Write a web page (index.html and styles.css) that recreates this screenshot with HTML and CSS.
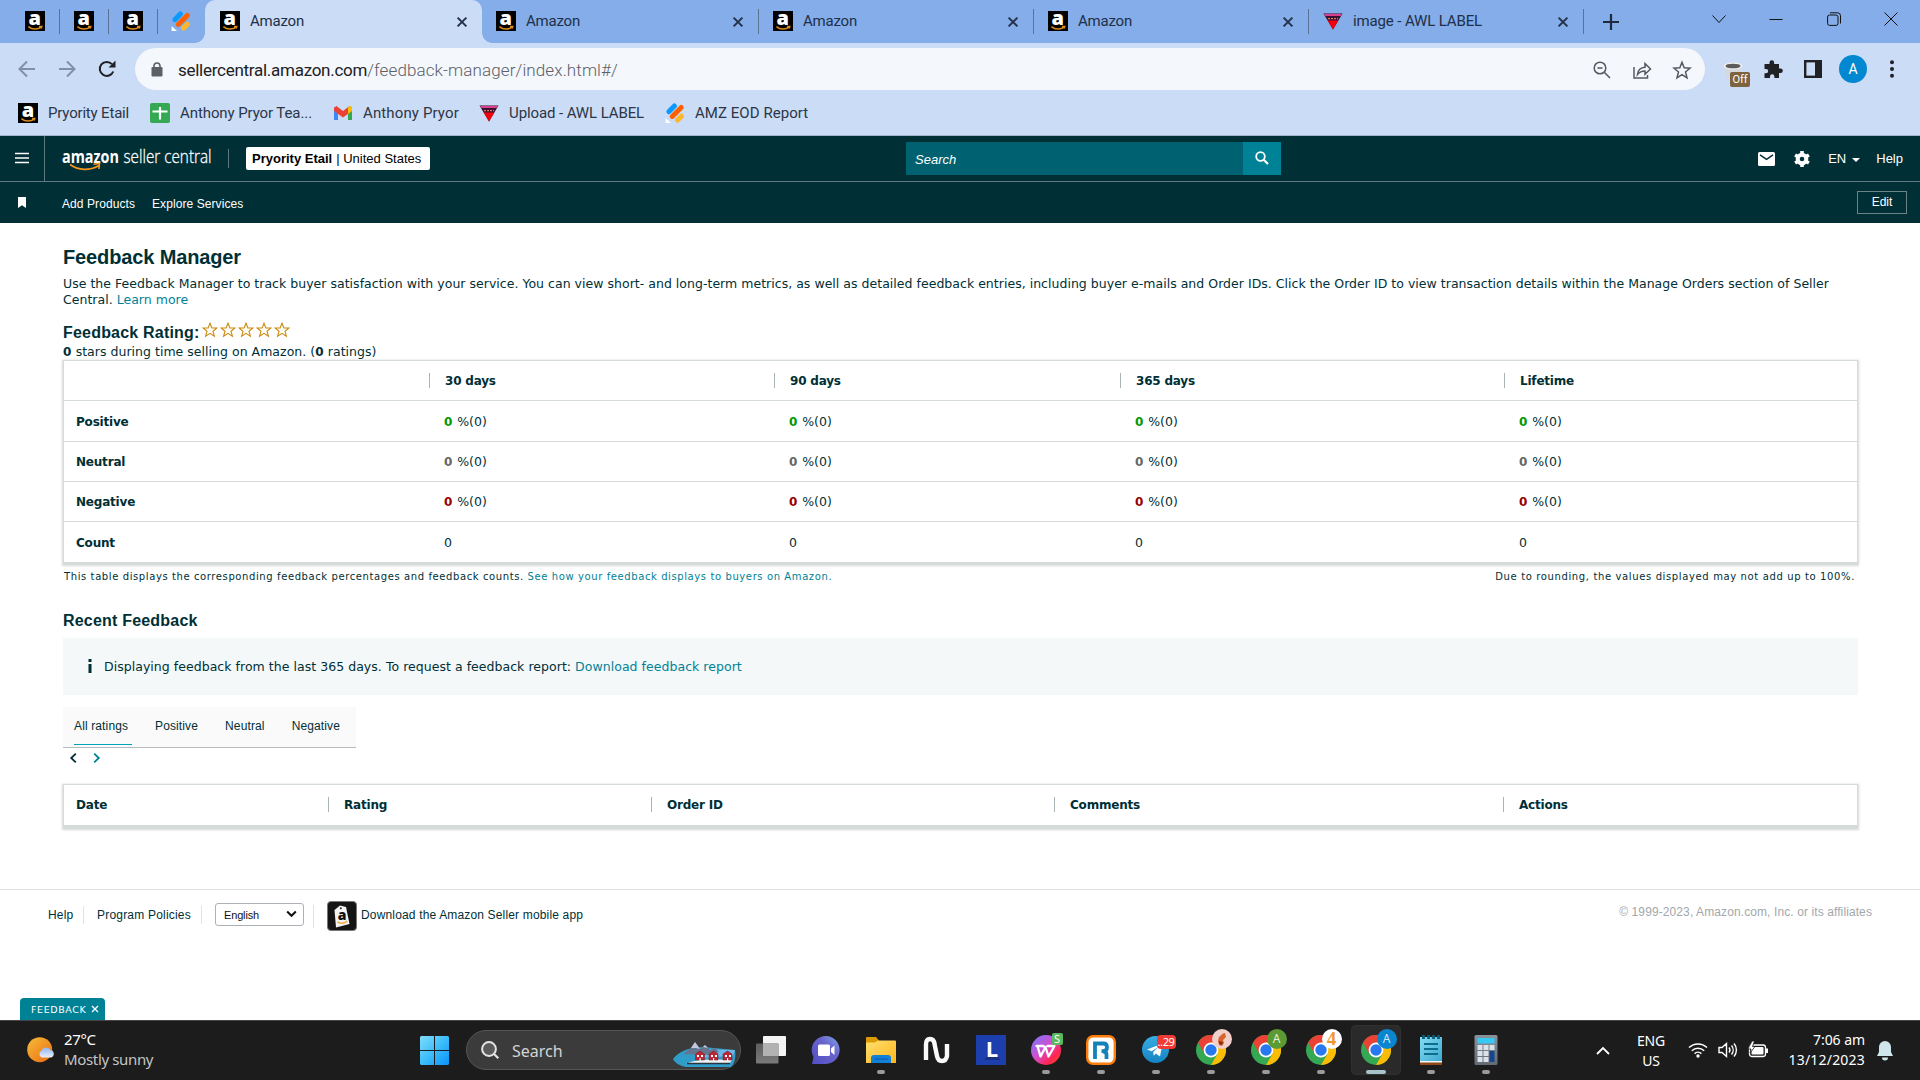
FILE: index.html
```html
<!DOCTYPE html>
<html lang="en">

<head>
    <meta charset="utf-8">
    <title>Feedback Manager</title>
    <link rel="stylesheet" href="styles.css">
</head>

<body>

    <!-- shared icons -->
    <svg class="defs">
        <defs>
            <linearGradient id="gwin" x1="0" y1="0" x2="1" y2="1"><stop offset="0" stop-color="#82dcfb"/><stop offset=".5" stop-color="#3cbdfb"/><stop offset="1" stop-color="#0a92f8"/></linearGradient>
            <linearGradient id="gsun" x1="0" y1="0" x2="1" y2="1"><stop offset="0" stop-color="#f5bd3a"/><stop offset="1" stop-color="#ec6a10"/></linearGradient>
            <linearGradient id="gcloud" x1="0" y1="0" x2="0" y2="1"><stop offset="0" stop-color="#93b5f2"/><stop offset="1" stop-color="#e8effb"/></linearGradient>
            <linearGradient id="gchat" x1="0" y1="1" x2="1" y2="0"><stop offset="0" stop-color="#4f4fc4"/><stop offset=".6" stop-color="#6a63cc"/><stop offset="1" stop-color="#7fa6e6"/></linearGradient>
            <linearGradient id="gfold" x1="0" y1="0" x2="1" y2="1"><stop offset="0" stop-color="#ffdf70"/><stop offset="1" stop-color="#ffb71c"/></linearGradient>
            <linearGradient id="gwps" x1="0" y1="0" x2="1" y2="1"><stop offset="0" stop-color="#6f7bff"/><stop offset=".45" stop-color="#d24fd0"/><stop offset=".75" stop-color="#ff2450"/><stop offset="1" stop-color="#ff5a1e"/></linearGradient>
            <linearGradient id="gtg" x1="0" y1="0" x2="0" y2="1"><stop offset="0" stop-color="#37aee2"/><stop offset="1" stop-color="#1583c2"/></linearGradient>
            <linearGradient id="gnote" x1="0" y1="0" x2="1" y2="1"><stop offset="0" stop-color="#85dcf2"/><stop offset="1" stop-color="#3ba8d0"/></linearGradient>
            <linearGradient id="gcalc" x1="0" y1="0" x2="0" y2="1"><stop offset="0" stop-color="#8a929c"/><stop offset="1" stop-color="#626a74"/></linearGradient>
            <linearGradient id="gtv" x1="0" y1="0" x2="0" y2="1"><stop offset="0" stop-color="#5e5e5e"/><stop offset="1" stop-color="#7a7a7a"/></linearGradient>
            <symbol id="amz" viewBox="0 0 20 20">
                <rect width="20" height="20" fill="#000"/>
                <text x="9.8" y="13.6" text-anchor="middle" font-family="Open Sans" font-weight="800" font-size="20" fill="#fff">a</text>
                <path d="M3.4 15.6c3.8 3.2 9.4 3 12.8.6M14 15.4h2.8l-.7 2.2" fill="none" stroke="#d98a1c" stroke-width="1.5"/>
            </symbol>
            <symbol id="jot" viewBox="0 0 20 20">
                <path d="M4 8.6 9.4 3" stroke="#0a99ff" stroke-width="5" stroke-linecap="round"/>
                <path d="M7.2 13.4 16.2 4.4" stroke="#ff6100" stroke-width="5" stroke-linecap="round"/>
                <path d="M12.6 17 16.4 13.2" stroke="#ffb629" stroke-width="5" stroke-linecap="round"/>
                <path d="M.6 15v5H6z" fill="#fff"/>
            </symbol>
            <symbol id="awl" viewBox="0 0 20 20">
                <path d="M.5 2.500h19L10 18.500z" fill="#3c1030"/>
                <path d="M4.600 9.500h10.800L10 18.500z" fill="#f4000c"/>
                <path d="M1.200 3h17.600l-1.200 2H2.400z" fill="#d8408c"/>
                <path d="M5 7.600h10" stroke="#e07a4a" stroke-width="1.400" stroke-dasharray="2 1"/>
            </symbol>
            <symbol id="cross" viewBox="0 0 12 12"><path d="M1.600 1.600l8.800 8.800M10.400 1.600l-8.800 8.800" stroke="#25324a" stroke-width="2" fill="none"/></symbol>
            <symbol id="chrome" viewBox="0 0 30 30">
                <circle cx="15" cy="15" r="15" fill="#34a853"/>
                <path d="M15 15 2 7.500A15 15 0 0 1 28 7.500z" fill="#ea4335"/>
                <path d="M15 7.500H28A15 15 0 0 1 15 30L21.500 18.800z" fill="#fbbc05"/>
                <path d="M2 7.500 8.500 18.800 15 8z" fill="#ea4335"/>
                <circle cx="15" cy="15" r="7.400" fill="#fff"/>
                <circle cx="15" cy="15" r="5.700" fill="#2878f0"/>
            </symbol>
            <symbol id="star" viewBox="0 0 16 16"><path d="M8 1.200 9.900 6h5l-3.900 3.200 1.400 5L8 11.300l-4.400 2.900 1.400-5L1.100 6h5z" fill="#fffdf6" stroke="#cc8a12" stroke-width="1.100"/></symbol>
        </defs>
    </svg>

    <!-- browser tabs -->
    <div class="tabs">
        <div class="pin"><svg><use href="#amz"/></svg></div>
        <div class="pin"><svg><use href="#amz"/></svg></div>
        <div class="pin"><svg><use href="#amz"/></svg></div>
        <div class="pin last"><svg><use href="#jot"/></svg></div>
        <div class="tab active"><svg class="fav"><use href="#amz"/></svg><span>Amazon</span><svg class="x"><use href="#cross"/></svg></div>
        <div class="tab"><svg class="fav"><use href="#amz"/></svg><span>Amazon</span><svg class="x"><use href="#cross"/></svg></div>
        <div class="tab"><svg class="fav"><use href="#amz"/></svg><span>Amazon</span><svg class="x"><use href="#cross"/></svg></div>
        <div class="tab"><svg class="fav"><use href="#amz"/></svg><span>Amazon</span><svg class="x"><use href="#cross"/></svg></div>
        <div class="tab"><svg class="fav"><use href="#awl"/></svg><span class="wide">image - AWL LABEL</span><svg class="x"><use href="#cross"/></svg></div>
        <svg class="plus" viewBox="0 0 16 16"><path d="M8 0v16M0 8h16" stroke="#1f2a3c" stroke-width="2.200"/></svg>
        <div class="winbtns">
            <svg viewBox="0 0 14 14"><path d="M.5 3.500 7 10.500l6.500-7" /></svg>
            <svg viewBox="0 0 14 14"><path d="M.5 7.500h13" /></svg>
            <svg viewBox="0 0 14 14"><rect x=".6" y="3" width="10.400" height="10.400" rx="2"/><path d="M3 .8h7.500q3 0 3 3V11.500"/></svg>
            <svg viewBox="0 0 14 14"><path d="M.5.500l13 13M13.500.500l-13 13"/></svg>
        </div>
    </div>

    <!-- address bar -->
    <div class="toolbar">
        <svg class="nav dim" viewBox="0 0 18 18"><path d="M17 9H2M9 1.500 1.500 9 9 16.500"/></svg>
        <svg class="nav dim" viewBox="0 0 18 18"><path d="M1 9h15M9 1.500 16.500 9 9 16.500"/></svg>
        <svg class="nav reload" viewBox="0 0 18 18"><path d="M15.300 11.500A7 7 0 1 1 14 4.200"/><path d="M17.500.5v7h-7z" class="tip"/></svg>
        <div class="omnibox">
            <svg class="lock" viewBox="0 0 12 15"><rect x=".5" y="5" width="11" height="9.500" rx="1.200" fill="#5c6066"/><path d="M3 6V4a3 3 0 0 1 6 0v2" fill="none" stroke="#5c6066" stroke-width="1.600"/></svg>
            <span class="host">sellercentral.amazon.com</span><span class="path">/feedback-manager/index.html#/</span>
            <svg class="ob first" viewBox="0 0 18 18"><circle cx="7" cy="7" r="5.800"/><path d="M11.500 11.500 17 17M4.400 7h5.200"/></svg>
            <svg class="ob" viewBox="0 0 18 18"><path d="M1 6v11h13.500v-3"/><path d="M4.500 13.500C5 9 8 6.500 12 6.300V2.500l5.500 5.500-5.500 5.300V10C8.500 10 6.500 11 4.500 13.500z"/></svg>
            <svg class="ob" viewBox="0 0 18 18"><path d="M9 1.200l2.200 5.600 5.800.4-4.500 3.800 1.500 5.800L9 13.600l-5 3.200 1.500-5.800L1 7.200l5.800-.4z"/></svg>
        </div>
        <div class="cup">
            <svg viewBox="0 0 20 18"><path d="M1 4h18l-3 13H4z" fill="#d5d8dd"/><ellipse cx="10" cy="4" rx="9.500" ry="3.600" fill="#eeeeec"/><ellipse cx="10" cy="4" rx="7.500" ry="2.300" fill="#5b5b5b"/></svg>
            <span>Off</span>
        </div>
        <svg class="ext" viewBox="0 0 20 20"><path d="M1.500 5h5V3.500a2.300 2.300 0 0 1 4.600 0V5H16v4.500h1.500a2.300 2.300 0 0 1 0 4.600H16V19h-4.600v-1.500a2.200 2.200 0 0 0-4.400 0V19H1.500v-4.700H3a2.200 2.200 0 0 0 0-4.400H1.500z" fill="#202124"/></svg>
        <svg class="side" viewBox="0 0 18 18"><rect x="1.200" y="1.200" width="15.600" height="15.600" fill="none" stroke="#202124" stroke-width="2.400"/><rect x="11" y="1" width="6" height="16" fill="#202124"/></svg>
        <div class="avatar">A</div>
        <svg class="dots" viewBox="0 0 4 18"><circle cx="2" cy="2.200" r="2"/><circle cx="2" cy="9" r="2"/><circle cx="2" cy="15.800" r="2"/></svg>
    </div>

    <!-- bookmarks -->
    <div class="bookmarks">
        <a class="bm b1"><svg><use href="#amz"/></svg>Pryority Etail</a>
        <a class="bm b2"><svg viewBox="0 0 20 20"><rect width="20" height="20" rx="2" fill="#34a853"/><path d="M10 4v12.500M2.500 8.500h15" stroke="#fff" stroke-width="2.200"/></svg>Anthony Pryor Tea...</a>
        <a class="bm b3"><svg viewBox="0 0 20 20"><path d="M1 4v13h4V8z" fill="#4285f4"/><path d="M19 4v13h-4V8z" fill="#34a853"/><path d="M1 4.800 3.500 3 10 8l6.500-5L19 4.800V8l-9 6.500L1 8z" fill="#ea4335"/><path d="M15 4.200 17 3q2 .4 2 2v3l-4 3z" fill="#fbbc04"/></svg>Anthony Pryor</a>
        <a class="bm b4"><svg><use href="#awl"/></svg>Upload - AWL LABEL</a>
        <a class="bm b5"><svg><use href="#jot"/></svg>AMZ EOD Report</a>
    </div>

    <!-- seller central header -->
    <div class="header">
        <div class="burger"><svg viewBox="0 0 14 12"><path d="M0 1.500h14M0 6h14M0 10.500h14" stroke="#fff" stroke-width="1.400"/></svg></div>
        <svg class="logo" viewBox="0 0 150 24">
            <text x="0" y="15" font-family="Open Sans" font-weight="700" font-size="17.500" textLength="57" lengthAdjust="spacingAndGlyphs" fill="#fff">amazon</text>
            <text x="61.500" y="15" font-family="Open Sans" font-weight="300" font-size="18" textLength="88" lengthAdjust="spacingAndGlyphs" fill="#fff" stroke="#fff" stroke-width=".3">seller central</text>
            <path d="M8 16.500c9 6.500 20 6 28.500 1.200M31.500 16.300l6-.8-.6 5.500" fill="none" stroke="#f7981f" stroke-width="1.600"/>
        </svg>
        <div class="store"><b>Pryority Etail</b><span>| United States</span></div>
        <div class="search"><i>Search</i><div class="go"><svg viewBox="0 0 14 14"><circle cx="5.500" cy="5.500" r="4.300" fill="none" stroke="#fff" stroke-width="1.800"/><path d="M8.700 8.700 13 13" stroke="#fff" stroke-width="2.200"/></svg></div></div>
        <div class="right">
            <svg class="mail" viewBox="0 0 17 14"><rect width="17" height="14" rx="1.500" fill="#fff"/><path d="M2 2.800l6.500 4.500L15 2.800" fill="none" stroke="#002f36" stroke-width="1.500"/></svg>
            <svg class="gear" viewBox="0 0 16 16"><circle cx="8" cy="8" r="4.300" fill="none" stroke="#fff" stroke-width="4"/><path d="M8 0v3.500M8 12.500V16M1.100 4l3 1.700M11.900 10.300l3 1.700M1.100 12l3-1.700M11.900 5.700l3-1.700" stroke="#fff" stroke-width="3.600"/></svg>
            <span>EN</span><em class="caret"></em><span class="help">Help</span>
        </div>
    </div>
    <div class="subnav">
        <svg class="flag" viewBox="0 0 8 11"><path d="M0 0h8v11L4 8.200 0 11z" fill="#fff"/></svg>
        <span class="s1">Add Products</span>
        <span class="s2">Explore Services</span>
        <span class="edit">Edit</span>
    </div>

    <!-- page content -->
    <div class="content">
        <h1>Feedback Manager</h1>
        <p class="intro">Use the Feedback Manager to track buyer satisfaction with your service. You can view short- and long-term metrics, as well as detailed feedback entries, including buyer e-mails and Order IDs. Click the Order ID to view transaction details within the Manage Orders section of Seller<br>Central. <a>Learn more</a></p>
        <div class="rating">
            <h2>Feedback Rating:</h2>
            <svg><use href="#star"/></svg><svg><use href="#star"/></svg><svg><use href="#star"/></svg><svg><use href="#star"/></svg><svg><use href="#star"/></svg>
        </div>
        <p class="stars"><b>0</b> stars during time selling on Amazon. (<b>0</b> ratings)</p>
        <table class="scores">
            <colgroup><col class="c1"><col class="c2"><col class="c3"><col class="c4"><col></colgroup>
            <tr><th></th><th><span>30 days</span></th><th><span>90 days</span></th><th><span>365 days</span></th><th><span>Lifetime</span></th></tr>
            <tr class="tall"><td>Positive</td><td><b class="pos">0</b> %(0)</td><td><b class="pos">0</b> %(0)</td><td><b class="pos">0</b> %(0)</td><td><b class="pos">0</b> %(0)</td></tr>
            <tr><td>Neutral</td><td><b class="neu">0</b> %(0)</td><td><b class="neu">0</b> %(0)</td><td><b class="neu">0</b> %(0)</td><td><b class="neu">0</b> %(0)</td></tr>
            <tr><td>Negative</td><td><b class="neg">0</b> %(0)</td><td><b class="neg">0</b> %(0)</td><td><b class="neg">0</b> %(0)</td><td><b class="neg">0</b> %(0)</td></tr>
            <tr class="tall"><td>Count</td><td>0</td><td>0</td><td>0</td><td>0</td></tr>
        </table>
        <div class="notes">
            <span>This table displays the corresponding feedback percentages and feedback counts. <a>See how your feedback displays to buyers on Amazon.</a></span>
            <span class="round">Due to rounding, the values displayed may not add up to 100%.</span>
        </div>
        <h2 class="recent">Recent Feedback</h2>
        <div class="info"><svg viewBox="0 0 4 14"><path d="M.5 0h3v3h-3zM.5 5h3v9h-3z" fill="#002f36"/></svg>Displaying feedback from the last 365 days. To request a feedback report:&nbsp;<a>Download feedback report</a></div>
        <div class="filters">
            <span class="on">All ratings</span><span>Positive</span><span>Neutral</span><span>Negative</span>
        </div>
        <div class="pager">
            <svg viewBox="0 0 7 10"><path d="M5.800.6 1.200 5l4.600 4.400" fill="none" stroke="#002f36" stroke-width="1.800"/></svg>
            <svg viewBox="0 0 7 10"><path d="M1.200.6 5.800 5 1.200 9.400" fill="none" stroke="#008296" stroke-width="1.800"/></svg>
        </div>
        <table class="entries">
            <colgroup><col class="e1"><col class="e2"><col class="e3"><col class="e4"><col></colgroup>
            <tr><th>Date</th><th><span>Rating</span></th><th><span>Order ID</span></th><th><span>Comments</span></th><th><span>Actions</span></th></tr>
        </table>
    </div>

    <!-- footer -->
    <div class="footer">
        <span class="f1">Help</span>
        <span class="f2">Program Policies</span>
        <div class="f3"><div class="lang">English<svg viewBox="0 0 12 8"><path d="M1.300 1.300 6 6l4.700-4.700" fill="none" stroke="#111" stroke-width="2.200"/></svg></div></div>
        <svg class="app" viewBox="0 0 30 30"><rect x=".5" y=".5" width="29" height="29" rx="3.500" fill="#141414" stroke="#777"/><path d="M7.500 9 13 4.500l6 1.500 3.500 17-13.500 3.500z" fill="#f4f4f4"/><circle cx="13.800" cy="7.300" r="1" fill="#222"/><text x="15" y="19" text-anchor="middle" font-family="Open Sans" font-weight="800" font-size="14" fill="#111">a</text><path d="M10.500 21c3.500 2 7 1.500 9.700-1" fill="none" stroke="#f3a83b" stroke-width="1.500"/></svg>
        <span class="dl">Download the Amazon Seller mobile app</span>
        <span class="copy">© 1999-2023, Amazon.com, Inc. or its affiliates</span>
    </div>
    <div class="fb"><div>FEEDBACK<svg viewBox="0 0 8 8"><path d="M1 1l6 6M7 1 1 7" stroke="#fff" stroke-width="1.300"/></svg></div></div>

    <!-- windows taskbar -->
    <div class="taskbar">
        <svg class="weather" viewBox="0 0 28 26"><circle cx="12.700" cy="12.700" r="12.500" fill="url(#gsun)"/><path d="M14.500 20.500a4 4 0 0 1 0-7 5 5 0 0 1 8.800-.5 3.900 3.900 0 0 1 1 7.500z" fill="url(#gcloud)"/></svg>
        <div class="temp"><b>27°C</b><span>Mostly sunny</span></div>
        <svg class="win" viewBox="0 0 29 29"><path d="M1 0h13v14H0V1zM15 0h13l1 1v13H15zM0 15h14v14H1l-1-1zM15 15h14v13l-1 1H15z" fill="url(#gwin)"/></svg>
        <div class="find">
            <svg class="mag" viewBox="0 0 18 18"><circle cx="8" cy="8" r="6.900" fill="#5a5a5a" stroke="#e4e4e4" stroke-width="2"/><path d="M13 13l4.300 4.300" stroke="#e4e4e4" stroke-width="2.200"/></svg>
            <span>Search</span>
            <svg class="art" viewBox="0 0 63 25"><path d="M0 17C5 10 15 5 30 5l32 3c1 6 0 13-4 17H13C7 24 2 21 0 17z" fill="#2f9cc9"/><path d="M20 7l42 1-2 6-34 2z" fill="#6db6e8"/><path d="M10 12 18 6l4-6 5 7 5-4 5 5 5-2 4 4-8 3z" fill="#66758f"/><path d="M18 6l4-6 5 7-4-1zM30 5l2-2 3 3z" fill="#c3c6dc"/><path d="M13 22c10-5 25-5 46-4l-3 4z" fill="#eef2f4"/><path d="M14 21.500h43" stroke="#27353c" stroke-width="1.500"/><g fill="#bb2733" stroke="#7f1722" stroke-width=".5"><path d="M22.500 18v-6l4.500-3 4.500 3v6zM36 18v-6l4.500-3 4.500 3v6zM50 18v-6l4.500-3 4.500 3v6z"/></g><g fill="#fff"><path d="M24 13h2v2h-2zM28 13h2v2h-2zM38 13h2v2h-2zM42 13h2v2h-2zM52 13h2v2h-2zM56 13h2v2h-2zM26.500 16h1.200v3h-1.200zM40 16h1.200v3H40zM54 16h1.200v3H54z"/></g></svg>
        </div>
        <div class="app-i"><svg viewBox="0 0 30 30"><rect x="7" y="1" width="23" height="20" rx="1" fill="#f4f4f4"/><rect x="0" y="8.500" width="22.500" height="20" rx="1" fill="url(#gtv)"/><rect x="7" y="8.500" width="15.500" height="12.500" fill="#b2b2b2"/></svg></div>
        <div class="app-i"><svg viewBox="0 0 30 30"><path d="M1 29 2.500 22A14 14 0 1 1 15 29z" fill="url(#gchat)"/><rect x="7" y="9.500" width="12" height="11.500" rx="1.500" fill="#fff"/><path d="M20 13.500 23.500 10.500v9.500L20 17z" fill="#fff"/></svg></div>
        <div class="app-i run"><svg viewBox="0 0 30 30"><path d="M0 3q0-1 1-1h9l3 3.500-2 3H0z" fill="#dc9a05"/><path d="M0 7.500h9l3-2h17q1 0 1 1V28H0z" fill="url(#gfold)"/><path d="M5 28v-5q0-3 3-3h14q3 0 3 3v5z" fill="#1280d8"/><path d="M9 24h12" stroke="#0a559c" stroke-width="1.200" stroke-linecap="round"/></svg></div>
        <div class="app-i"><svg viewBox="0 0 30 30"><path d="M5 25V9.500Q5 4 9 4t4.500 5l2.500 12q1 5 5 5t5-5V9" fill="none" stroke="#fafafa" stroke-width="4.400"/></svg></div>
        <div class="app-i"><svg viewBox="0 0 30 30"><rect width="30" height="30" fill="#1d3fae"/><path d="M8 25 11 22h11l3 3z" fill="#173285"/><text x="16" y="22" text-anchor="middle" font-family="Open Sans" font-weight="700" font-size="22" fill="#fff">L</text></svg></div>
        <div class="app-i run"><svg viewBox="0 0 30 30"><circle cx="15" cy="15" r="15" fill="url(#gwps)"/><path d="M5.500 11h7L15 14M6.500 11 9.500 21.500 14.500 12l3 9.500L23.500 11h-7" fill="none" stroke="#fff" stroke-width="2.300" stroke-linejoin="round" stroke-linecap="round"/></svg><i class="bd green">S</i></div>
        <div class="app-i run"><svg viewBox="0 0 30 30"><rect x="1.200" y="1.200" width="27.600" height="27.600" rx="6" fill="#fff" stroke="#ff7d0a" stroke-width="2.400"/><path d="M9 24V8.500h8.500q3.500 0 3.500 3.800t-4 3.800h-1.500M17 16.500q3.500 0 3.500 3V24" fill="none" stroke="#1482b8" stroke-width="3.800"/></svg></div>
        <div class="app-i run"><svg viewBox="0 0 30 30"><circle cx="14.500" cy="14.500" r="13.500" fill="url(#gtg)"/><path d="M6 14.500 21.500 8.500 19 21.500l-4.200-3-2 2.200-.6-3.600 5.300-5-7 4.200z" fill="#fff"/></svg><i class="bd red">..29</i></div>
        <div class="app-i run"><svg><use href="#chrome"/></svg><i class="bd pink"><svg viewBox="0 0 20 20"><path d="M7 8c2-1 3-4 6-4l1 4-3 3 1 3-2 3-3-1-1-4z" fill="#d9632c"/><path d="M7 12l4 1-1 3-3-1z" fill="#8a3212"/></svg></i></div>
        <div class="app-i run"><svg><use href="#chrome"/></svg><i class="bd lime">A</i></div>
        <div class="app-i run"><svg><use href="#chrome"/></svg><i class="bd white">4</i></div>
        <div class="app-i run cur"><svg><use href="#chrome"/></svg><i class="bd blue">A</i></div>
        <div class="app-i run"><svg viewBox="0 0 30 30"><path d="M4 27h22v3H4z" fill="#8f4a17"/><path d="M4 2h22v25H4z" fill="url(#gnote)"/><path d="M4 26h22v1.500H4z" fill="#f4f6f7"/><path d="M8 9h14M8 14h14M8 19h14" stroke="#0e6c8c" stroke-width="2"/><path d="M7.500 0v4M12.500 0v4M17.500 0v4M22.500 0v4" stroke="#0b5a78" stroke-width="2.800"/></svg></div>
        <div class="app-i run"><svg viewBox="0 0 30 30"><rect x="3.500" width="23" height="30" rx="1.500" fill="url(#gcalc)"/><path d="M6.500 3h17v5.500h-17z" fill="#36c9f4"/><path d="M6.500 10h5v5h-5zM12.500 10h5v5h-5zM18.500 10h5v5h-5zM6.500 16h5v5h-5zM12.500 16h5v5h-5zM6.500 22h5v5h-5zM12.500 22h5v5h-5z" fill="#dbe1e8"/><path d="M18.500 16h5v11h-5z" fill="#17458c"/></svg></div>
        <svg class="up" viewBox="0 0 14 8"><path d="M1 7 7 1l6 6" fill="none" stroke="#fff" stroke-width="1.800"/></svg>
        <div class="kb">ENG<br>US</div>
        <svg class="wifi" viewBox="0 0 20 16"><g fill="none" stroke="#fff" stroke-width="1.500"><path d="M1 5.500a13 13 0 0 1 18 0M3.800 8.700a9 9 0 0 1 12.400 0M6.600 11.600a5 5 0 0 1 6.800 0"/></g><circle cx="10" cy="14" r="1.700" fill="#fff"/></svg>
        <svg class="vol" viewBox="0 0 20 16"><g fill="none" stroke="#fff" stroke-width="1.400"><path d="M1 5.500h3L8.500 1.500v13L4 10.500H1zM11 5.500a4 4 0 0 1 0 5M13.500 3.500a7 7 0 0 1 0 9M16 1.500a10 10 0 0 1 0 13"/></g></svg>
        <svg class="bat" viewBox="0 0 20 16"><rect x="1.500" y="3" width="16" height="11.500" rx="2.500" fill="none" stroke="#fff" stroke-width="1.300"/><rect x="3.500" y="5" width="12" height="7.500" rx="1" fill="#fff"/><path d="M18 6.500h2v4.500h-2z" fill="#fff"/><path d="M4-1 0 7h3l-1 4L7 4.500H4.500L6.500-1z" fill="#fff" stroke="#1c1c1c" stroke-width=".8"/></svg>
        <div class="clock"><span class="tm">7:06 am</span><span>13/12/2023</span></div>
        <svg class="bell" viewBox="0 0 16 20"><path d="M8 0a6 6 0 0 1 6 6v5l2 4H0l2-4V6a6 6 0 0 1 6-6zM5 16.500h6a3 3 0 0 1-6 0z" fill="#cfe6ea"/></svg>
    </div>

</body>

</html>
```
FILE: styles.css
```css
* {
  box-sizing: border-box;
}

body {
  margin: 0;
  width: 1920px;
  height: 1080px;
  overflow: hidden;
  display: flex;
  flex-direction: column;
  background: #fff;
  color: #002f36;
  font-family: "Liberation Sans", Arial, sans-serif;
}

h1, h2, p {
  margin: 0;
}

svg {
  flex: none;
  overflow: visible;
}

a {
  color: #008296;
}

.defs {
  position: absolute;
  width: 0;
  height: 0;
}

/* browser tabs */
.tabs {
  height: 43px;
  flex: none;
  display: flex;
  align-items: center;
  padding-left: 11px;
  background: #84ade9;
  font: 15px Roboto, sans-serif;
  color: #20304a;
}

.pin {
  width: 49px;
  height: 25px;
  display: flex;
  align-items: center;
  justify-content: center;
  border-right: 1px solid #5c7294;
}

.pin.last {
  width: 47px;
  border: 0;
  padding-right: 2px;
}

.pin svg, .fav {
  width: 20px;
  height: 20px;
  margin-top: -1px;
}

.tab {
  width: 275px;
  height: 25px;
  display: flex;
  align-items: center;
  padding: 0 14px 0 14px;
  border-right: 1px solid #5c7294;
}

.tab span {
  margin: -2px 0 0 10px;
  flex: 1;
  letter-spacing: -0.2px;
}

.tab span.wide {
  letter-spacing: -0.13px;
}

.tab.active {
  position: relative;
  width: 277px;
  height: 43px;
  padding-left: 15px;
  border: 0;
  border-radius: 10px 10px 0 0;
  background: #cbdcf6;
}

.tab.active::before, .tab.active::after {
  content: "";
  position: absolute;
  bottom: 0;
  width: 10px;
  height: 10px;
}

.tab.active::before {
  left: -10px;
  background: radial-gradient(circle at 0 0, transparent 9.5px, #cbdcf6 10px);
}

.tab.active::after {
  right: -10px;
  background: radial-gradient(circle at 100% 0, transparent 9.5px, #cbdcf6 10px);
}

.tab.active + .tab {
  width: 277px;
}

.x {
  width: 12px;
  height: 12px;
}

.plus {
  width: 16px;
  height: 16px;
  margin-left: 19px;
}

.winbtns {
  margin: 0 22px 6px auto;
  display: flex;
  gap: 43.500px;
}

.winbtns svg {
  width: 14px;
  height: 14px;
  fill: none;
  stroke: #111;
}

/* address bar */
.toolbar {
  height: 53px;
  flex: none;
  display: flex;
  align-items: center;
  padding: 0 21px 1px 18px;
  background: #cbdcf6;
}

.nav {
  width: 18px;
  height: 18px;
  margin-right: 22px;
  fill: none;
  stroke: #202124;
  stroke-width: 2;
}

.nav.dim {
  stroke: #8090ab;
}

.nav.reload {
  margin-right: 19px;
}

.nav .tip {
  fill: #202124;
  stroke: none;
}

.omnibox {
  width: 1570px;
  height: 42px;
  border-radius: 21px;
  background: #f4f7fc;
  display: flex;
  align-items: center;
  padding: 1px 14px 0 16px;
  font: 17px Roboto, sans-serif;
}

.lock {
  width: 12px;
  height: 15px;
  margin-right: 15px;
}

.host {
  color: #202124;
  letter-spacing: -0.27px;
}

.path {
  color: #5c6067;
  font-weight: 300;
  letter-spacing: 0.12px;
}

.ob {
  width: 18px;
  height: 18px;
  margin-left: 22px;
  fill: none;
  stroke: #55595f;
  stroke-width: 1.500;
}

.ob.first {
  margin-left: auto;
}

.cup {
  position: relative;
  width: 28px;
  height: 26px;
  margin: 3px 0 0 18px;
}

.cup svg {
  width: 20px;
  height: 18px;
  margin-top: 4px;
}

.cup span {
  position: absolute;
  left: 7px;
  top: 14px;
  width: 20px;
  height: 15px;
  border-radius: 2px;
  background: #7d6340;
  color: #fff;
  font: 11px/15px Roboto, sans-serif;
  text-align: center;
}

.ext {
  width: 20px;
  height: 20px;
  margin-left: 12px;
}

.side {
  width: 18px;
  height: 18px;
  margin-left: 21px;
}

.avatar {
  width: 28px;
  height: 28px;
  margin-left: 17px;
  border-radius: 50%;
  background: #0288d1;
  color: #fff;
  font: 14px/28px Roboto, sans-serif;
  text-align: center;
}

.dots {
  width: 4px;
  height: 18px;
  margin-left: 23px;
  fill: #202124;
}

/* bookmarks */
.bookmarks {
  height: 40px;
  flex: none;
  display: flex;
  align-items: center;
  padding: 0 0 6px 18px;
  background: #cbdcf6;
  border-bottom: 1px solid #a3b5cc;
  font: 15px Roboto, sans-serif;
}

.bm {
  display: flex;
  align-items: center;
  color: #2c3646;
}

.bm svg {
  width: 20px;
  height: 20px;
  margin-right: 10px;
}

.b1 {
  width: 132px;
  letter-spacing: -0.18px;
}

.b2 {
  width: 183px;
  letter-spacing: -0.09px;
}

.b3 {
  width: 146px;
  letter-spacing: 0.13px;
}

.b4 {
  width: 186px;
  letter-spacing: -0.1px;
}

.b5 {
  letter-spacing: 0.05px;
}

/* seller central header */
.header {
  height: 46px;
  flex: none;
  display: flex;
  align-items: center;
  background: #002f36;
  border-bottom: 1px solid #5f7a7e;
  color: #fff;
  font-size: 13px;
}

.burger {
  width: 45px;
  height: 45px;
  padding: 16px 0 0 15px;
  border-right: 1px solid #5f7a7e;
}

.burger svg {
  display: block;
  width: 14px;
  height: 12px;
}

.logo {
  width: 150px;
  height: 24px;
  margin: 3px 0 0 16.500px;
}

.store {
  height: 23px;
  width: 184px;
  margin: 0 0 0 34.500px;
  padding-left: 6px;
  border-radius: 2px;
  background: #fff;
  color: #000;
  line-height: 24px;
  position: relative;
}

.store::before {
  content: "";
  position: absolute;
  left: -18px;
  top: 2px;
  height: 19px;
  border-left: 1px solid #5f7a7e;
}

.store span {
  margin-left: 4px;
}

.search {
  width: 375px;
  height: 33px;
  margin-left: 476px;
  padding-left: 9px;
  display: flex;
  align-items: center;
  background: #006170;
}

.search i {
  margin-top: 1px;
}

.go {
  width: 38px;
  height: 33px;
  margin-left: auto;
  padding: 9px 0 0 12px;
  background: #008296;
}

.go svg {
  display: block;
  width: 14px;
  height: 14px;
}

.right {
  margin-left: auto;
  padding-right: 17px;
  display: flex;
  align-items: center;
}

.mail {
  width: 17px;
  height: 14px;
}

.gear {
  width: 16px;
  height: 16px;
  margin: 0 18px 0 19px;
}

.caret {
  margin: 2px 16px 0 6px;
  border: 4px solid transparent;
  border-top: 4px solid #fff;
  border-bottom: 0;
}

.subnav {
  height: 41px;
  flex: none;
  display: flex;
  align-items: center;
  padding: 2px 13px 0 18px;
  background: #002f36;
  color: #fff;
  font-size: 12px;
}

.flag {
  width: 8px;
  height: 11px;
  margin: 0 36px 3px 0;
}

.s1, .s2 {
  width: 90px;
  letter-spacing: 0.08px;
}

.s2 {
  width: auto;
}

.edit {
  width: 50px;
  height: 23px;
  margin: 0 0 3px auto;
  border: 1px solid #6d8487;
  line-height: 21px;
  text-align: center;
}

/* page content */
.content {
  margin: 23px 62px 0 63px;
  font: 12.500px/16px "DejaVu Sans", Verdana, sans-serif;
  letter-spacing: 0.025px;
}

.content b, .content th, .content td:first-child {
  font-size: 12px;
  font-weight: bold;
  letter-spacing: -0.2px;
}

h1 {
  font: bold 20px/22px "Liberation Sans", Arial, sans-serif;
  letter-spacing: -0.13px;
}

h2 {
  font: bold 16px/20px "Liberation Sans", Arial, sans-serif;
  letter-spacing: 0.2px;
}

.intro {
  margin-top: 8px;
  white-space: nowrap;
}

.rating {
  display: flex;
  margin-top: 15px;
  height: 20px;
}

.rating h2 {
  margin: 0 1px 0 0;
}

.rating svg {
  width: 16px;
  height: 16px;
  margin: -1px 1px 0;
}

.stars {
  margin: 1px 0 0;
}

.stars b {
  margin-right: 0.5px;
}

table {
  width: 1795px;
  table-layout: fixed;
  border-collapse: separate;
  border-spacing: 0;
  border: 1px solid #d5dbdb;
  box-shadow: 0 1px 2px 1px rgba(0, 20, 20, 0.16);
}

th, td {
  height: 40px;
  padding: 0 0 0 15px;
  text-align: left;
  border-bottom: 1px solid #d5dbdb;
}

td b {
  margin-right: 1px;
}

th:first-child, td:first-child {
  padding-left: 12px;
}

.tall td {
  height: 41px;
  padding-top: 1px;
}

th {
  padding-left: 0;
}

th span {
  display: inline-block;
  height: 15px;
  line-height: 17px;
  padding-left: 15px;
  border-left: 1px solid #a9b4b6;
}

.c1 { width: 365px; }
.c2 { width: 345px; }
.c3 { width: 346px; }
.c4 { width: 384px; }
.e1 { width: 264px; }
.e2 { width: 323px; }
.e3 { width: 403px; }
.e4 { width: 449px; }

.pos { color: #090; }
.neu { color: #666; }
.neg { color: #900; }

.notes {
  display: flex;
  justify-content: space-between;
  padding: 5px 3px 0 1px;
  font-size: 10px;
  letter-spacing: 0.6px;
}

.notes .round {
  letter-spacing: 0.63px;
}

.recent {
  margin-top: 26px;
}

.info {
  height: 57px;
  margin-top: 7px;
  padding-left: 25px;
  display: flex;
  align-items: center;
  background: #f4f8f9;
  letter-spacing: 0.04px;
}

.info svg {
  width: 4px;
  height: 14px;
  margin: -2px 12px 0 0;
}

.filters {
  width: 293px;
  height: 41px;
  margin-top: 12px;
  padding-left: 11px;
  display: flex;
  gap: 27px;
  background: #fafafa;
  border-bottom: 1px solid #b5babd;
  font: 12px/38px "Liberation Sans", Arial, sans-serif;
  letter-spacing: 0.13px;
}

.filters .on {
  width: 58px;
  height: 38px;
  margin-right: -4px;
  border-bottom: 1px solid #00a2b8;
}

.pager {
  margin: 5px 0 0 7px;
  height: 10px;
  display: flex;
  gap: 16px;
}

.pager svg {
  width: 7px;
  height: 10px;
}

.entries {
  margin-top: 21px;
}

.entries th {
  height: 42px;
  padding-bottom: 1px;
  border-bottom-width: 2px;
}

/* footer */
.footer {
  height: 109px;
  flex: none;
  margin-top: 61px;
  padding: 11px 48px 0 48px;
  display: flex;
  align-items: flex-start;
  border-top: 1px solid #e1e4e6;
  font-size: 12px;
  line-height: 28px;
}

.f1, .f2, .f3 {
  height: 18px;
  margin-top: 5px;
  line-height: 18px;
  border-right: 1px solid #dfe3e6;
}

.f1 {
  width: 36px;
  letter-spacing: 0.15px;
}

.f2 {
  width: 118px;
  padding-left: 13px;
  letter-spacing: 0.2px;
}

.f3 {
  width: 112px;
  height: 23px;
  margin-top: 4px;
}

.lang {
  width: 89px;
  height: 23px;
  margin: -2px 0 0 13px;
  padding: 1px 6px 0 8px;
  display: flex;
  align-items: center;
  justify-content: space-between;
  border: 1px solid #adb1b8;
  border-radius: 3px;
  color: #111;
  font-size: 11px;
  letter-spacing: -0.15px;
}

.lang svg {
  width: 11px;
  height: 8px;
  margin-top: -2px;
}

.app {
  width: 30px;
  height: 30px;
  margin: 0 4px 0 13px;
}

.dl {
  letter-spacing: 0.16px;
}

.copy {
  margin: -3px 0 0 auto;
  color: #a3a7aa;
  letter-spacing: 0.1px;
}

.fb {
  height: 22px;
  flex: none;
  padding: 0 0 0 20px;
}

.fb div {
  height: 22px;
  width: 85px;
  padding-left: 11px;
  border-radius: 4px 4px 0 0;
  background: #008296;
  color: #fff;
  font: 9.500px/23px "DejaVu Sans", Verdana, sans-serif;
  letter-spacing: 0.600px;
}

.fb svg {
  width: 8px;
  height: 8px;
  margin-left: 5px;
}

/* windows taskbar */
.taskbar {
  height: 60px;
  flex: none;
  margin-top: auto;
  display: flex;
  align-items: center;
  border-top: 1px solid #464646;
  background: #1c1c1c;
  color: #fff;
  font: 14px/20px "Noto Sans", sans-serif;
}

.weather {
  width: 28px;
  height: 26px;
  margin: -2px 9px 0 27px;
}

.temp {
  width: 356px;
  margin-top: -4px;
  display: flex;
  flex-direction: column;
  font-size: 15px;
  line-height: 20px;
  letter-spacing: -0.350px;
}

.temp b {
  font-weight: normal;
}

.temp span {
  color: #c4c4c4;
}

.win {
  width: 29px;
  height: 29px;
}

.find {
  width: 275px;
  height: 40px;
  margin: -1px 2px 0 17px;
  padding: 0 4px 0 14px;
  display: flex;
  align-items: center;
  border: 1px solid #555;
  border-radius: 20px;
  background: #3b3b3b;
  color: #d4d4d4;
  font-size: 16px;
}

.find span {
  margin-top: 1px;
}

.mag {
  width: 18px;
  height: 18px;
  margin-right: 13px;
}

.art {
  width: 63px;
  height: 25px;
  margin: 8px 0 0 auto;
}

.app-i {
  position: relative;
  width: 50px;
  height: 50px;
  margin: -1px 2.500px 0;
  flex: none;
  display: flex;
  align-items: center;
  justify-content: center;
}

.app-i > svg {
  width: 30px;
  height: 30px;
}

.run::after {
  content: "";
  position: absolute;
  left: 21px;
  bottom: 1px;
  width: 8px;
  height: 4px;
  border-radius: 2px;
  background: #9a9a9a;
}

.cur {
  border-radius: 5px;
  background: #2a2a2a;
  box-shadow: inset 0 0 0 1px #303030;
}

.run.cur::after {
  left: 15px;
  width: 20px;
  background: #a9c3cb;
}

.bd {
  position: absolute;
  left: 26px;
  top: 4px;
  width: 20px;
  height: 20px;
  border-radius: 50%;
  color: #fff;
  font: 12px/20px "Noto Sans", sans-serif;
  text-align: center;
}

.bd svg {
  width: 20px;
  height: 20px;
}

.green {
  left: 31px;
  top: 8px;
  width: 11px;
  height: 12px;
  border-radius: 2px;
  background: #5cb85c;
  line-height: 12px;
  font-size: 11px;
}

.red {
  left: 26px;
  top: 10px;
  width: 19px;
  height: 14px;
  border-radius: 4px;
  background: #f03a33;
  line-height: 14px;
  font-size: 11px;
  letter-spacing: -0.400px;
}

.pink { background: #f1cfcb; }
.lime { background: #5c9a34; color: #e2efd8; }
.white { background: #fff; color: #f2962e; font: bold 19px/20px "Liberation Serif", serif; }
.blue { background: #0a86d0; color: #cfe6f7; }

.up {
  width: 14px;
  height: 8px;
  margin-left: auto;
}

.kb {
  width: 40px;
  margin: 0 17px 0 21px;
  text-align: center;
  letter-spacing: -0.2px;
}

.wifi, .vol, .bat {
  width: 20px;
  height: 16px;
  margin: -2px 10px 0 0;
}

.clock {
  width: 87px;
  margin-top: -1px;
  display: flex;
  flex-direction: column;
  align-items: flex-end;
  letter-spacing: 0.2px;
}

.clock .tm {
  letter-spacing: -0.05px;
}

.bell {
  width: 16px;
  height: 20px;
  margin: 0 27px 0 12px;
}
```
